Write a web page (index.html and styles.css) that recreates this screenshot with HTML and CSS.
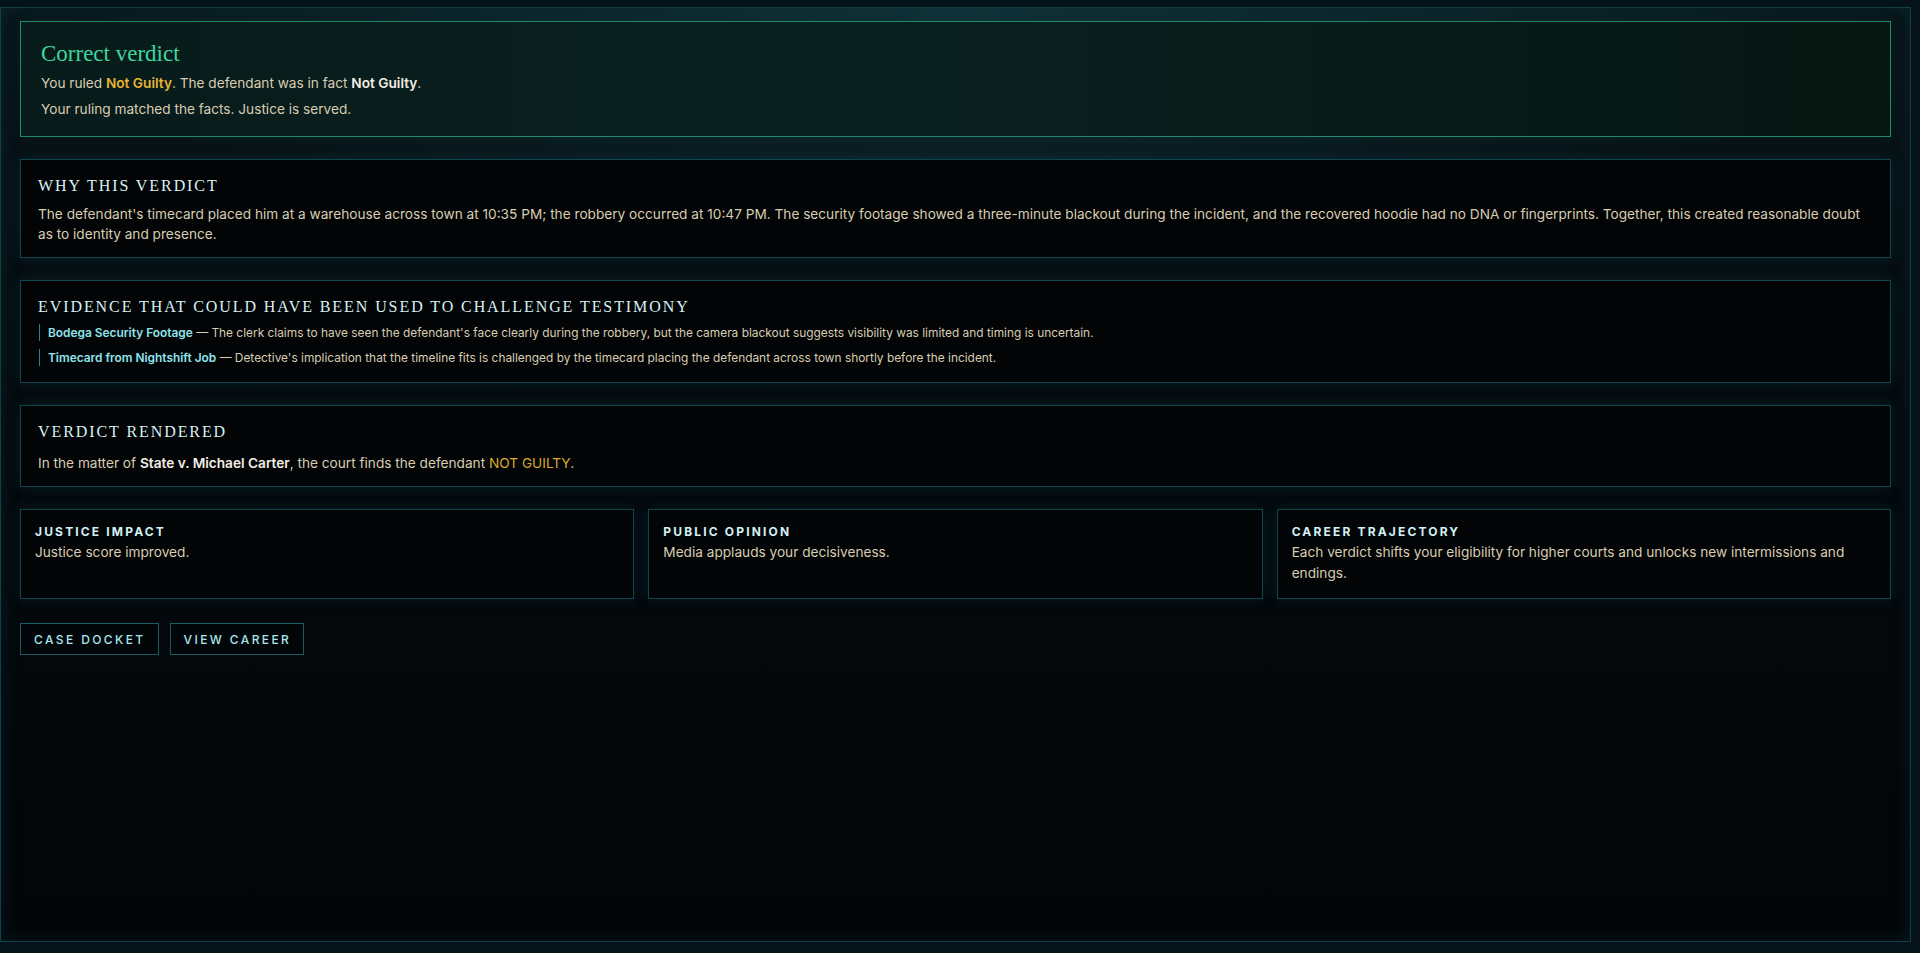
FILE: index.html
```html
<!DOCTYPE html>
<html lang="en">
<head>
<meta charset="utf-8">
<title>Verdict</title>
<link rel="stylesheet" href="styles.css">
</head>
<body>
<main class="panel">
  <section class="card card-result">
    <h2 class="result-title">Correct verdict</h2>
    <p class="result-line">You ruled <span class="gold">Not Guilty</span>. The defendant was in fact <strong>Not Guilty</strong>.</p>
    <p class="result-line">Your ruling matched the facts. Justice is served.</p>
  </section>

  <section class="card card-text">
    <h3 class="sec-title">Why this verdict</h3>
    <p class="sec-text">The defendant's timecard placed him at a warehouse across town at 10:35 PM; the robbery occurred at 10:47 PM. The security footage showed a three-minute blackout during the incident, and the recovered hoodie had no DNA or fingerprints. Together, this created reasonable doubt as to identity and presence.</p>
  </section>

  <section class="card">
    <h3 class="sec-title">Evidence that could have been used to challenge testimony</h3>
    <ul class="evidence">
      <li><strong>Bodega Security Footage</strong> — The clerk claims to have seen the defendant's face clearly during the robbery, but the camera blackout suggests visibility was limited and timing is uncertain.</li>
      <li><strong>Timecard from Nightshift Job</strong> — Detective's implication that the timeline fits is challenged by the timecard placing the defendant across town shortly before the incident.</li>
    </ul>
  </section>

  <section class="card card-text">
    <h3 class="sec-title">Verdict rendered</h3>
    <p class="sec-text verdict-text">In the matter of <strong>State v. Michael Carter</strong>, the court finds the defendant <span class="gold-plain">NOT GUILTY</span>.</p>
  </section>

  <div class="impact-grid">
    <div class="mini-card">
      <h4 class="mini-title">Justice Impact</h4>
      <p class="mini-text">Justice score improved.</p>
    </div>
    <div class="mini-card">
      <h4 class="mini-title">Public Opinion</h4>
      <p class="mini-text">Media applauds your decisiveness.</p>
    </div>
    <div class="mini-card">
      <h4 class="mini-title">Career Trajectory</h4>
      <p class="mini-text">Each verdict shifts your eligibility for higher courts and unlocks new intermissions and endings.</p>
    </div>
  </div>

  <div class="actions">
    <button class="btn" type="button">Case Docket</button>
    <button class="btn" type="button">View Career</button>
  </div>
</main>
</body>
</html>
```

FILE: styles.css
```css
* {
  box-sizing: border-box;
}

html, body {
  margin: 0;
  padding: 0;
}

body {
  background: #06121a;
  font-family: Inter, "Noto Sans", "Liberation Sans", sans-serif;
  color: #d8cdb3;
  height: 953px;
  overflow: hidden;
}

.panel {
  margin: 7px 9px 0 0;
  height: 935px;
  border: 1px solid #0f4048;
  background:
    radial-gradient(ellipse 900px 260px at 50% 0%, rgba(28, 78, 88, 0.45), rgba(28, 78, 88, 0) 100%),
    linear-gradient(180deg, #081419 0%, #050a0e 45%, #030508 100%);
  box-shadow: inset 0 0 18px rgba(16, 90, 100, 0.25);
  padding: 13px 19px 0 19px;
  display: flex;
  flex-direction: column;
  gap: 22px;
}

.card {
  background: #020405;
  border: 1px solid #0e4650;
  box-shadow: 0 0 14px rgba(14, 100, 112, 0.22);
  padding: 16px 20px 16px 17px;
}

.card-text {
  padding-bottom: 13px;
}

.card-result {
  background: linear-gradient(90deg, #081b1b 0%, #0a2020 45%, #061712 100%);
  border-color: #1f8a68;
  box-shadow: 0 0 14px rgba(14, 90, 80, 0.2);
  padding: 18px 20px 16px 20px;
}

.result-title {
  margin: 0 0 5px 0;
  font-family: "Liberation Serif", "DejaVu Serif", serif;
  font-weight: 400;
  font-size: 23px;
  line-height: 1.2;
  color: #3fd69c;
}

.result-line {
  margin: 0 0 5px 0;
  font-size: 13.65px;
  line-height: 21px;
}

.result-line:last-child {
  margin-bottom: 0;
}

.gold {
  color: #e6b334;
  font-weight: 600;
}

.gold-plain {
  color: #dcaa2e;
}

strong {
  color: #f1ede3;
  font-weight: 600;
}

.sec-title {
  margin: 0;
  font-family: "Liberation Serif", "DejaVu Serif", serif;
  font-weight: 400;
  font-size: 16px;
  line-height: 1.2;
  letter-spacing: 0.12em;
  text-transform: uppercase;
  color: #d9f2f5;
}

.sec-text {
  margin: 9px 0 0 0;
  font-size: 13.65px;
  line-height: 20px;
}

.verdict-text {
  margin-top: 12px;
}

.evidence {
  list-style: none;
  margin: 8px 0 0 1px;
  padding: 0;
  display: flex;
  flex-direction: column;
  gap: 8px;
}

.evidence li {
  border-left: 1px solid #2b8290;
  padding-left: 8px;
  font-size: 11.9px;
  line-height: 17px;
}

.evidence li strong {
  color: #8fe4ee;
}

.impact-grid {
  display: grid;
  grid-template-columns: repeat(3, 1fr);
  gap: 14px;
}

.mini-card {
  background: #020405;
  border: 1px solid #0e4650;
  box-shadow: 0 0 14px rgba(14, 100, 112, 0.22);
  padding: 14px;
  min-height: 89px;
}

.mini-title {
  margin: 0;
  font-size: 12px;
  line-height: 15px;
  font-weight: 700;
  letter-spacing: 0.18em;
  text-transform: uppercase;
  color: #d3f1f5;
}

.mini-text {
  margin: 3px 0 0 0;
  font-size: 13.65px;
  line-height: 21px;
}

.actions {
  display: flex;
  gap: 11px;
  margin-top: 2px;
}

.btn {
  height: 32px;
  padding: 0 12px 0 13px;
  background: #020608;
  border: 1px solid #1a5c66;
  color: #a9e7ef;
  font-family: Inter, "Noto Sans", "Liberation Sans", sans-serif;
  font-size: 12px;
  font-weight: 500;
  letter-spacing: 0.2em;
  text-transform: uppercase;
  cursor: pointer;
}
```
